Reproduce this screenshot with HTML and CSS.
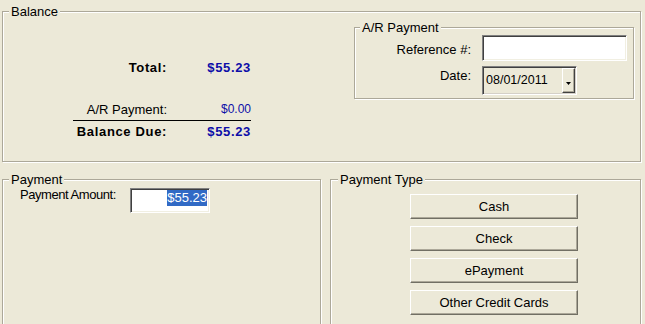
FILE: index.html
```html
<!DOCTYPE html>
<html>
<head>
<meta charset="utf-8">
<title>Balance</title>
<link rel="stylesheet" href="styles.css">
</head>
<body>
<div class="window">
  <fieldset class="group balance">
    <legend>Balance</legend>
    <div class="balance-body">
      <div class="totals">
        <div class="t-label strong">Total:</div>
        <div class="t-value strong">$55.23</div>
        <div class="t-label plain gap">A/R Payment:</div>
        <div class="t-value plain gap">$0.00</div>
        <div class="t-rule"></div>
        <div class="t-label strong">Balance Due:</div>
        <div class="t-value strong">$55.23</div>
      </div>
      <fieldset class="group ar-group">
        <legend>A/R Payment</legend>
        <div class="ar-form">
          <span class="f-label ref-label">Reference #:</span>
          <div class="textbox ref-box"></div>
          <span class="f-label date-label">Date:</span>
          <div class="combo">
            <span class="combo-text">08/01/2011</span>
            <span class="combo-btn">
              <svg width="5" height="3" viewBox="0 0 5 3"><path d="M0 0h5L2.5 3z" fill="#000"/></svg>
            </span>
          </div>
        </div>
      </fieldset>
    </div>
  </fieldset>
  <div class="row">
    <fieldset class="group payment">
      <legend>Payment</legend>
      <div class="amount-row">
        <span class="amount-label">Payment Amount:</span>
        <div class="textbox amount-box"><span class="selected">$55.23</span></div>
      </div>
    </fieldset>
    <fieldset class="group ptype">
      <legend>Payment Type</legend>
      <div class="buttons">
        <button class="btn" type="button">Cash</button>
        <button class="btn" type="button">Check</button>
        <button class="btn" type="button">ePayment</button>
        <button class="btn" type="button">Other Credit Cards</button>
      </div>
    </fieldset>
  </div>
</div>
</body>
</html>
```
FILE: styles.css
```css
html, body {
  margin: 0;
  padding: 0;
  background: #ece9d8;
  overflow: hidden;
}
body {
  font-family: "Liberation Sans", Arial, sans-serif;
  font-size: 13px;
  line-height: 15px;
  color: #000;
}
.window {
  width: 645px;
  height: 324px;
  box-sizing: border-box;
  padding: 4px 4px 0 2px;
  overflow: hidden;
}
.group {
  margin: 0;
  padding: 0;
  min-inline-size: 0;
  box-sizing: border-box;
  border: 1px solid #aca899;
  box-shadow: 1px 1px 0 #fff, inset 1px 1px 0 #fff;
}
.group > legend {
  margin-left: 6px;
  padding: 0 2px;
  background: #ece9d8;
  font-size: 13px;
  line-height: 15px;
}
.balance {
  width: 639px;
  height: 158px;
}
.balance-body {
  display: flex;
  justify-content: space-between;
  align-items: flex-start;
}
.totals {
  margin: 41px 0 0 70px;
  width: 178px;
  display: grid;
  grid-template-columns: 94px 84px;
}
.t-label, .t-value {
  text-align: right;
}
.t-value {
  color: #0e0ea8;
}
.strong {
  font-weight: bold;
  letter-spacing: 0.65px;
}
.plain.t-value {
  font-size: 12px;
}
.gap {
  margin-top: 27px;
}
.t-rule {
  grid-column: 1 / 3;
  height: 1px;
  background: #000;
  margin: 3px 0 3px;
}
.ar-group {
  width: 280px;
  height: 79px;
  margin: 1px 6px 0 0;
}
.ar-group > legend {
  margin-left: 5px;
}
.ar-form {
  display: grid;
  grid-template-columns: 116px 145px;
  column-gap: 11px;
  row-gap: 5px;
  align-items: start;
}
.f-label {
  text-align: right;
}
.ref-label {
  padding-top: 7px;
}
.date-label {
  padding-top: 2px;
}
.textbox {
  box-sizing: border-box;
  background: #fff;
  border: 1px solid;
  border-color: #808080 #fff #fff #808080;
  box-shadow: inset 1px 1px 0 #404040, inset -1px -1px 0 #f1efe2;
}
.ref-box {
  height: 26px;
}
.combo {
  box-sizing: border-box;
  width: 95px;
  height: 29px;
  display: flex;
  align-items: stretch;
  justify-content: space-between;
  border: 1px solid;
  border-color: #808080 #fff #fff #808080;
  box-shadow: inset 1px 1px 0 #404040, inset -1px -1px 0 #d4d0c8;
  padding: 1px 1px 1px 1px;
}
.combo-text {
  font-size: 12.5px;
  padding: 5px 0 0 2px;
}
.combo-btn {
  box-sizing: border-box;
  width: 13px;
  display: flex;
  align-items: center;
  justify-content: center;
  padding-top: 5px;
  border: 1px solid;
  border-color: #fff #404040 #404040 #fff;
  box-shadow: inset -1px -1px 0 #aca899;
  background: #ece9d8;
}
.row {
  display: flex;
  gap: 9px;
  margin-top: 10px;
}
.payment {
  width: 319px;
  height: 170px;
}
.ptype {
  width: 311px;
  height: 170px;
}
.ptype > legend {
  margin-left: 7px;
}
.amount-row {
  display: flex;
  align-items: flex-start;
  padding-left: 17px;
}
.amount-label {
  width: 110px;
  letter-spacing: -0.45px;
}
.amount-box {
  width: 80px;
  height: 25px;
  margin-top: 1px;
  display: flex;
  justify-content: flex-end;
  align-items: flex-start;
  padding: 1px 2px 0 0;
}
.selected {
  background: #316ac5;
  color: #fff;
  line-height: 16px;
}
.buttons {
  display: flex;
  flex-direction: column;
  align-items: flex-start;
  gap: 7px;
  padding: 7px 0 0 79px;
}
.btn {
  box-sizing: border-box;
  width: 168px;
  height: 25px;
  margin: 0;
  padding: 0;
  font: inherit;
  color: #000;
  background: #ece9d8;
  border: 1px solid;
  border-color: #fff #716f64 #716f64 #fff;
  box-shadow: inset -1px -1px 0 #aca899;
  border-radius: 0;
}
```
